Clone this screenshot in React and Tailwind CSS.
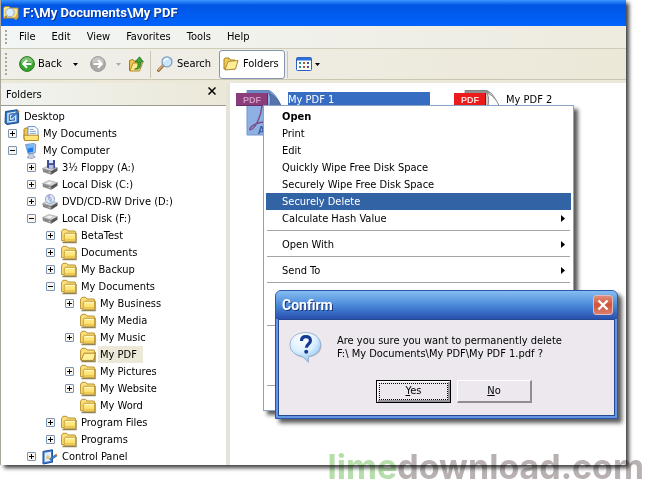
import React from "react";

function FolderIcon({ open }) {
  return (
    <svg viewBox="0 0 16 16" className="size-4 shrink-0" aria-hidden="true">
      <path d="M1.500 14.500h13.500V5" stroke="#6b5a20" strokeWidth="1.400" opacity=".75" fill="none" />
      <path d="M.6 12.700V3.200L2 1.300h3.600L7 3h7l.6 1v8.700z" fill="#fbe07c" stroke="#b8912e" />
      {open ? (
        <path d="M1 13.400 4 6.200h11.400l-1.800 7.200z" fill="#fff09c" stroke="#ae8528" />
      ) : (
        <>
          <path d="M3.200 13.300V6.200l1.200-1h10.200v8.100z" fill="#ffe678" stroke="#c39c3c" />
          <path d="M4.500 6.700h9" stroke="#fffde0" />
          <path d="M4 11.800h10" stroke="#efc850" strokeWidth="2" />
        </>
      )}
    </svg>
  );
}

function DriveBase({ y = 0 }) {
  return (
    <g transform={`translate(0 ${y})`}>
      <path d="M.5 6.500 7 3.500l8.500 2.200-6.300 3.400z" fill="#d4d4d4" stroke="#999" strokeWidth=".6" />
      <path d="M.5 6.500 9.200 9.100v3.700L1 10z" fill="#898989" />
      <path d="M9.200 9.100l6.300-3.400v3.100l-6.300 4z" fill="#555" />
      <path d="M4 6.200l3.500-1.400 3 .8-3.400 1.600z" fill="#f6f6f6" />
      <circle cx="7.400" cy="10.500" r=".8" fill="#c5d8c0" />
    </g>
  );
}

function TreeIcon({ kind }) {
  if (kind === "folder") return <FolderIcon />;
  if (kind === "open") return <FolderIcon open />;
  return (
    <svg viewBox="0 0 16 16" className="size-4 shrink-0" aria-hidden="true">
      {kind === "disk" && <DriveBase />}
      {kind === "floppy" && (
        <>
          <DriveBase y={2} />
          <path d="M5 0h8v8.500H6L5 7.500z" fill="#3c4f96" />
          <path d="M7 0h4v3.200H7z" fill="#dfe5f5" />
          <path d="M7 5h4.400v3.500H7z" fill="#b9c2dd" />
        </>
      )}
      {kind === "dvd" && (
        <>
          <DriveBase y={3} />
          <circle cx="8" cy="5" r="4.600" fill="#dfe6f6" stroke="#8c9ac4" strokeWidth=".8" />
          <path d="M8 5 4.600 2.200A4.400 4.400 0 0 1 8 .8z" fill="#b9a8e8" />
          <path d="m8 5 3.400 2.800A4.400 4.400 0 0 1 8 9.300z" fill="#9fd3ee" />
          <circle cx="8" cy="5" r="1.300" fill="#fff" stroke="#6f7fae" strokeWidth=".7" />
        </>
      )}
      {kind === "desktop" && (
        <>
          <path d="M1.500 2.500 13 .8l1.600 1.400v11.500L3 15.500l-2-1.600z" fill="#2f74c0" stroke="#1d4d8c" />
          <path d="M3.200 4 12.400 2.600v9.800l-9.200 1.300z" fill="#d6e9fb" />
          <path d="M5.500 5.300 10 4.600M5.300 5.500v6l5-.6V8.500" stroke="#2c69b5" fill="none" strokeWidth="1.200" />
          <path d="m7 9 .8-2.300 5.200-4 1 1-5.200 4.600z" fill="#3b8be0" stroke="#174a8e" strokeWidth=".6" />
          <path d="m13 2.700 1.500-1.300 1.200 1.300L14 4z" fill="#d9762b" />
        </>
      )}
      {kind === "docs" && (
        <>
          <path d="M1 13.500V3.400L2.300 2H6l1 1.300v10.200z" fill="#edc54f" stroke="#a57c1e" />
          <path d="M5 .6h7l3 2.800v9H5z" fill="#fff" stroke="#6a8fc9" />
          <path d="M6.800 3.400h4M6.800 5.400h6M6.800 7.400h6" stroke="#7fa5dc" />
          <path d="M.8 9.200h14.600v5.300H1.600z" fill="#ffe47a" stroke="#b58a27" />
        </>
      )}
      {kind === "computer" && (
        <>
          <path d="M2.500 1.500 10.800.5l2 1-.6 8.300-7 1.200z" fill="#a9c8ec" stroke="#5f84b5" strokeWidth=".8" />
          <path d="m3.700 2.700 6.900-1-.5 7-5 1z" fill="#1e7de8" />
          <path d="m3.700 2.700 6.900-1-.2 3C8 4.300 6 5.500 4.300 6z" fill="#79bcff" />
          <path d="m7 11 3-.6.4 2.300 2 1.200-3.400 1.600-5-.8z" fill="#c8d3e3" stroke="#7e8da6" strokeWidth=".7" />
        </>
      )}
      {kind === "control" && (
        <>
          <path d="M1 2.400 10.500.8v12.400L1 15z" fill="#3b7bd4" stroke="#1f4f9b" />
          <path d="m2.600 3.800 6.400-1v9l-6.400 1.200z" fill="#e3effc" />
          <path d="m5.800 5 .8 2.200 1.800.2-1.500 1.200.4 2.200-1.600-1-1.600 1.300.5-2.300-1.300-1 1.700-.4z" fill="#e9c36c" />
          <path d="m7.500 9.800 6-4 1.200 1.400-6.200 4z" fill="#3f8fe8" stroke="#1b4f97" strokeWidth=".6" />
          <path d="m13 5.800 1.500-1 1 1.600-1.300.8z" fill="#c97a33" />
        </>
      )}
    </svg>
  );
}

const INDENT = ["pl-[3px]", "pl-[7px]", "pl-[26px]", "pl-[45px]", "pl-[64px]"];

const TREE = [
  [0, "", "desktop", "Desktop"],
  [1, "+", "docs", "My Documents"],
  [1, "-", "computer", "My Computer"],
  [2, "+", "floppy", "3½ Floppy (A:)"],
  [2, "+", "disk", "Local Disk (C:)"],
  [2, "+", "dvd", "DVD/CD-RW Drive (D:)"],
  [2, "-", "disk", "Local Disk (F:)"],
  [3, "+", "folder", "BetaTest"],
  [3, "+", "folder", "Documents"],
  [3, "+", "folder", "My Backup"],
  [3, "-", "folder", "My Documents"],
  [4, "+", "folder", "My Business"],
  [4, "", "folder", "My Media"],
  [4, "+", "folder", "My Music"],
  [4, "", "open", "My PDF"],
  [4, "+", "folder", "My Pictures"],
  [4, "+", "folder", "My Website"],
  [4, "", "folder", "My Word"],
  [3, "+", "folder", "Program Files"],
  [3, "+", "folder", "Programs"],
  [2, "+", "control", "Control Panel"],
];

function Toggle({ sign }) {
  return (
    <button aria-label={sign === "+" ? "Expand" : "Collapse"} className="size-[9px] shrink-0">
      <svg viewBox="0 0 9 9" className="block size-[9px]">
        <rect x=".5" y=".5" width="8" height="8" rx=".5" fill="#f6f5f0" stroke="#7c94b0" />
        <path d={sign === "+" ? "M2 4.500h5M4.500 2v5" : "M2 4.500h5"} stroke="#000" />
      </svg>
    </button>
  );
}

function TreeRow({ level, sign, kind, label }) {
  return (
    <li className={`flex h-[17px] items-center ${INDENT[level]}`}>
      {level > 0 && <span className="mr-1.5 flex w-[9px] shrink-0">{sign && <Toggle sign={sign} />}</span>}
      <TreeIcon kind={kind} />
      <span className={`ml-0.5 px-0.5 leading-[17px] ${kind === "open" ? "bg-[#ece9d8] pr-1.5" : ""}`}>{label}</span>
    </li>
  );
}

function PdfIcon({ selected }) {
  return (
    <svg viewBox="0 0 46 47" className="h-[47px] w-[46px] shrink-0" aria-hidden="true">
      <path d="M11 .5h21c5 1 9 6 12 14.500v30H11z" fill={selected ? "#8fb0e2" : "#c9c9c9"} stroke={selected ? "#7396cc" : "#9a9a9a"} />
      <path d="M11 0h22l3 3H11z" fill={selected ? "#5d80bd" : "#777"} opacity=".7" />
      <path d="M33 3c2 4 2 8 1 12.500h11C42 9 38 5 33 3z" fill={selected ? "#5576ab" : "#fdfdfd"} stroke={selected ? "#4c6da4" : "#8c8c8c"} />
      <path d="M14 40c5-1 11-13 12-24M14 40c-1-3 7-8 14-8" stroke={selected ? "#7c4e8e" : "#c22"} strokeWidth="1.500" fill="none" />
      <text x="22" y="44" fontSize="10" fontWeight="bold" fontFamily="Open Sans, sans-serif" fill={selected ? "#3c62a6" : "#555"}>A</text>
      <rect x="0" y="3" width="32" height="13" fill={selected ? "#8b3c7a" : "#ed1c1c"} />
      <path d="M0 15.500h31.500V3" stroke={selected ? "#643066" : "#8d1010"} fill="none" />
      <text x="7" y="13" fontSize="9" fontWeight="bold" fontFamily="Liberation Sans, sans-serif" fill={selected ? "#d09ac5" : "#ffd9d9"}>PDF</text>
    </svg>
  );
}

function Caret({ className = "text-black" }) {
  return (
    <svg viewBox="0 0 5 3" className={`h-[3px] w-[5px] shrink-0 ${className}`} aria-hidden="true">
      <path d="M0 0h5L2.500 3z" fill="currentColor" />
    </svg>
  );
}

function ArrowBall({ forward }) {
  return (
    <svg viewBox="0 0 16 16" className="size-4 shrink-0" aria-hidden="true">
      <circle cx="8" cy="8" r="7.400" fill={forward ? "#aaa" : "#36a52c"} stroke={forward ? "#999" : "#2a7a22"} />
      <path d="M2 7a6 6 0 0 1 12 0C10 5.500 6 6 2 7z" fill="#fff" opacity=".35" />
      <path
        d={forward ? "M3.500 8h8M8 4.200 11.800 8 8 11.800" : "M12.500 8h-8M8 4.200 4.200 8 8 11.800"}
        stroke="#fff"
        strokeWidth="2"
        fill="none"
      />
    </svg>
  );
}

function Grip({ className }) {
  return (
    <svg viewBox="0 0 2 24" preserveAspectRatio="xMidYMid slice" className={`w-0.5 shrink-0 ${className}`} aria-hidden="true">
      <path d="M1 1v23" stroke="#aaa79a" strokeWidth="2" strokeDasharray="2 2" />
    </svg>
  );
}

function MenuItem({ children, arrow, bold, active }) {
  return (
    <button
      role="menuitem"
      className={`flex h-[17px] w-full items-center justify-between pr-1.5 pl-4 text-left leading-[17px] ${
        active ? "bg-[#3163a5] text-white" : ""
      } ${bold ? "font-bold" : ""}`}
    >
      {children}
      {arrow && (
        <svg viewBox="0 0 4 7" className="h-[7px] w-1" aria-hidden="true">
          <path d="M0 0v7l4-3.500z" />
        </svg>
      )}
    </button>
  );
}

function Separator() {
  return <hr className="mx-px mt-[3px] mb-[5px] border-t border-[#a5a5a8]" />;
}

function ContextMenu() {
  return (
    <div
      role="menu"
      className="absolute top-[105px] left-[262px] w-[311px] border border-[#8ba3c4] bg-white p-0.5 shadow-[4px_4px_4px_rgba(0,0,0,0.65)]"
    >
      <MenuItem bold>Open</MenuItem>
      <MenuItem>Print</MenuItem>
      <MenuItem>Edit</MenuItem>
      <MenuItem>Quickly Wipe Free Disk Space</MenuItem>
      <MenuItem>Securely Wipe Free Disk Space</MenuItem>
      <MenuItem active>Securely Delete</MenuItem>
      <MenuItem arrow>Calculate Hash Value</MenuItem>
      <Separator />
      <MenuItem arrow>Open With</MenuItem>
      <Separator />
      <MenuItem arrow>Send To</MenuItem>
      <Separator />
      <div className="h-[34px]" />
      <Separator />
      <div className="h-[51px]" />
      <Separator />
      <div className="h-[17px]" />
    </div>
  );
}

function ConfirmDialog() {
  return (
    <div
      role="dialog"
      aria-labelledby="confirm-title"
      className="absolute top-[290px] left-[274px] w-[343px] rounded-t-md border border-[#2a56b0] bg-[#6496e4] px-0.5 pb-0.5 shadow-[4px_4px_4px_rgba(0,0,0,0.65)]"
    >
      <div className="-mx-0.5 flex h-7 items-center justify-between rounded-t-[5px] bg-linear-to-b from-[#86bdf0] via-[#4a8ada] to-[#2a4fae] pr-1 pl-1.5">
        <h2 id="confirm-title" className="font-[Roboto,sans-serif] text-[14px] leading-5 font-bold text-white [text-shadow:1px_1px_0_#15357c]">
          Confirm
        </h2>
        <button aria-label="Close" className="size-5 rounded-[3px] border border-[#e7b9b4] bg-linear-to-b from-[#df8d7c] via-[#cf5236] to-[#d98070]">
          <svg viewBox="0 0 18 18" className="block size-[18px]">
            <path d="m4.500 4.500 9 9m0-9-9 9" stroke="#fff" strokeWidth="2.400" />
          </svg>
        </button>
      </div>
      <div className="border border-[#254a91] bg-[#ece8ee] px-2.5 py-3">
        <div className="flex gap-3.5">
          <svg viewBox="0 0 34 32" className="h-8 w-[34px] shrink-0" aria-hidden="true">
            <defs>
              <radialGradient id="bubble" cx=".4" cy=".2" r=".9">
                <stop offset="0" stopColor="#fff" />
                <stop offset=".5" stopColor="#dcefff" />
                <stop offset="1" stopColor="#6fb4f2" />
              </radialGradient>
            </defs>
            <path d="M17 1.500C8.500 1.500 2 6.500 2 13.500s5.500 11 12 12l6 5.500v-5.800c7-1 12.500-5 12.500-11.700S26 1.500 17 1.500z" fill="#777" opacity=".45" />
            <path d="M16.500.5C8 .5 1 5.500 1 12.500s5.500 11 12.500 12l6 5.800v-5.800c7-1 12-5 12-12S25 .5 16.500.5z" fill="url(#bubble)" stroke="#9db4cf" />
            <path d="M12.500 9c0-3 2-4.300 4.300-4.300 2.700 0 4.600 1.500 4.600 4 0 3.300-4 3.600-4 7" stroke="#153c92" strokeWidth="3.200" fill="none" />
            <circle cx="17.200" cy="19.800" r="2" fill="#153c92" />
          </svg>
          <p className="pt-0.5 leading-[13px] whitespace-nowrap">
            Are you sure you want to permanently delete
            <br />
            F:\ My Documents\My PDF\My PDF 1.pdf ?
          </p>
        </div>
        <div className="mt-4 ml-[87px] flex gap-1.5">
          <button className="h-[23px] w-[75px] border border-black bg-[#ece8ee] p-0.5 shadow-[inset_1px_1px_0_#fff,inset_-2px_-2px_0_#9a979c]">
            <span className="flex h-full items-center justify-center border border-dotted border-black">
              <span>
                <u>Y</u>es
              </span>
            </span>
          </button>
          <button className="h-[23px] w-[75px] border-t border-r-2 border-b-2 border-l border-t-white border-r-[#8f8d92] border-b-[#8f8d92] border-l-white bg-[#ece8ee]">
            <u>N</u>o
          </button>
        </div>
      </div>
    </div>
  );
}

function Toolbar() {
  return (
    <div className="flex h-[31px] items-center border-b border-[#c9c5b0] bg-linear-to-r from-[#f0efea] to-[#ece8d8]">
      <Grip className="ml-1 h-[22px]" />
      <button className="ml-3 flex items-center gap-[3px]">
        <ArrowBall />
        <span className="w-8 text-left">Back</span>
        <Caret />
      </button>
      <button aria-label="Forward" className="ml-3 flex items-center gap-2.5">
        <ArrowBall forward />
        <Caret className="text-[#aaa]" />
      </button>
      <button aria-label="Up" className="ml-2">
        <svg viewBox="0 0 15 16" className="block h-4 w-[15px]">
          <path d="M.5 14.500V4.500l3-1 2 1.500h5v9.500z" fill="#f0c74e" stroke="#a37b1c" />
          <path d="m1 15 3-8h9.500l-3 8z" fill="#ffe98a" stroke="#b08a2a" />
          <path d="M5.500 13c3 0 3.500-2 3.500-7H6L10.500.8 14.500 6h-2.700c0 5-.8 8-6.300 7z" fill="#3fa535" stroke="#22691c" strokeWidth=".7" />
        </svg>
      </button>
      <span className="ml-1.5 h-[27px] w-px bg-[#c9c5b0]" />
      <button className="ml-1.5 flex items-center gap-1">
        <svg viewBox="0 0 16 16" className="size-4">
          <path d="m1.500 14.500 5-5.500" stroke="#9a6c3c" strokeWidth="3" strokeLinecap="round" />
          <path d="m1.500 14 5-5.500" stroke="#ddb37c" strokeWidth="1.200" strokeLinecap="round" />
          <circle cx="10" cy="5.800" r="5" fill="#cbe6fb" stroke="#7e9cc4" strokeWidth="1.300" />
          <path d="M7 5.500C7.500 3.500 9 2.600 11 2.800" stroke="#fff" strokeWidth="1.400" fill="none" />
        </svg>
        <span className="w-9 text-left">Search</span>
      </button>
      <button className="ml-1.5 flex h-[29px] w-[66px] items-center gap-1 rounded-[3px] border border-[#8296b3] bg-white pl-[3px]">
        <svg viewBox="0 0 16 16" className="size-4">
          <path d="M1 13V3l1.500-1H6l1.500 2H12v9z" fill="#f0cb58" stroke="#a5801f" />
          <path d="M2 14 5 5.500l10-1L12.500 13z" fill="#ffed97" stroke="#b38c2c" />
        </svg>
        Folders
      </button>
      <span className="ml-0.5 h-[27px] w-px bg-[#c9c5b0]" />
      <button aria-label="Views" className="ml-2 flex items-center gap-[3px]">
        <svg viewBox="0 0 16 14" className="h-3.5 w-4">
          <rect x=".5" y=".5" width="15" height="13" rx="1" fill="#fff" stroke="#2a62bd" />
          <path d="M1 2h14" stroke="#2f6fd6" strokeWidth="3" />
          <path d="M3 6h2M3 10h2" stroke="#2c8f8f" strokeWidth="2" />
          <path d="M7 6h2M7 10h2" stroke="#c0582e" strokeWidth="2" />
          <path d="M11 6h2M11 10h2" stroke="#3a5ca8" strokeWidth="2" />
        </svg>
        <Caret />
      </button>
    </div>
  );
}

export default function App() {
  return (
    <div className="relative bg-white pr-6 pb-[34px] font-['DejaVu_Sans_Condensed','DejaVu_Sans',sans-serif] text-[11px] text-black">
      <div className="relative ml-px shadow-[3px_3px_4px_rgba(0,0,0,0.75)]">
        <div className="absolute inset-y-0 -left-px w-px bg-[#aaa69b]" />
        <header className="flex h-[26px] items-center gap-1 bg-linear-to-b from-[#3b95ff] from-0% via-[#0055e5] via-20% to-[#0263fb] pl-0.5">
          <svg viewBox="0 0 16 16" className="size-4" aria-hidden="true">
            <path d="M.5 13V3L2 1.500h4L7.500 3H15v10z" fill="#ffe680" stroke="#b08a2d" />
            <path d="m11 14.500 4-8-1 8z" fill="#d8aa3a" />
            <circle cx="7" cy="7.500" r="4.300" fill="#dceefd" stroke="#8fabc9" />
            <path d="m3.500 11-2.300 3" stroke="#a57c4c" strokeWidth="2" />
          </svg>
          <h1 className="font-[Roboto,sans-serif] text-[13px] leading-5 font-bold text-white [text-shadow:1px_1px_0_#0a2f8c]">
            F:\My Documents\My PDF
          </h1>
        </header>

        <nav className="flex h-[23px] items-center border-b border-[#d0ccba] bg-linear-to-r from-[#f2f6f4] to-[#eeebdf]">
          <Grip className="ml-1 h-3.5" />
          <div className="ml-3 flex gap-4">
            {["File", "Edit", "View", "Favorites", "Tools", "Help"].map((name) => (
              <button key={name}>{name}</button>
            ))}
          </div>
        </nav>

        <Toolbar />

        <div className="flex border-t-3 border-[#ece8d8]">
          <aside className="w-[229px] shrink-0 border-r-4 border-[#e6e4d8]">
            <div className="flex h-[23px] items-start justify-between border-b border-[#9c9a90] bg-linear-to-r from-[#f0f3f0] to-[#ece8d8] pr-2.5 pl-[5px]">
              <h2 className="pt-1 leading-4">Folders</h2>
              <button aria-label="Close folders" className="pt-1">
                <svg viewBox="0 0 8 8" className="block size-2">
                  <path d="m.5.5 7 7m0-7-7 7" stroke="#000" strokeWidth="1.500" />
                </svg>
              </button>
            </div>
            <ul className="pt-0.5">
              {TREE.map(([level, sign, kind, label], i) => (
                <TreeRow key={i} level={level} sign={sign} kind={kind} label={label} />
              ))}
            </ul>
          </aside>
          <main className="flex flex-1 items-start gap-6 bg-white pt-[7px] pl-1.5">
            <div className="flex items-start gap-1.5">
              <PdfIcon selected />
              <span className="mt-0.5 w-[142px] bg-[#366cc2] leading-[15px] text-white">My PDF 1</span>
            </div>
            <div className="flex items-start gap-1.5">
              <PdfIcon />
              <span className="mt-0.5 leading-[15px]">My PDF 2</span>
            </div>
          </main>
        </div>

        <ContextMenu />
        <ConfirmDialog />
      </div>

      <p className="absolute right-1.5 bottom-3 font-[Inter,sans-serif] text-[34px] leading-10 font-bold text-[#b9b1b1] mix-blend-multiply">
        <span className="text-[#b5deab]">lime</span>download.com
      </p>
    </div>
  );
}
